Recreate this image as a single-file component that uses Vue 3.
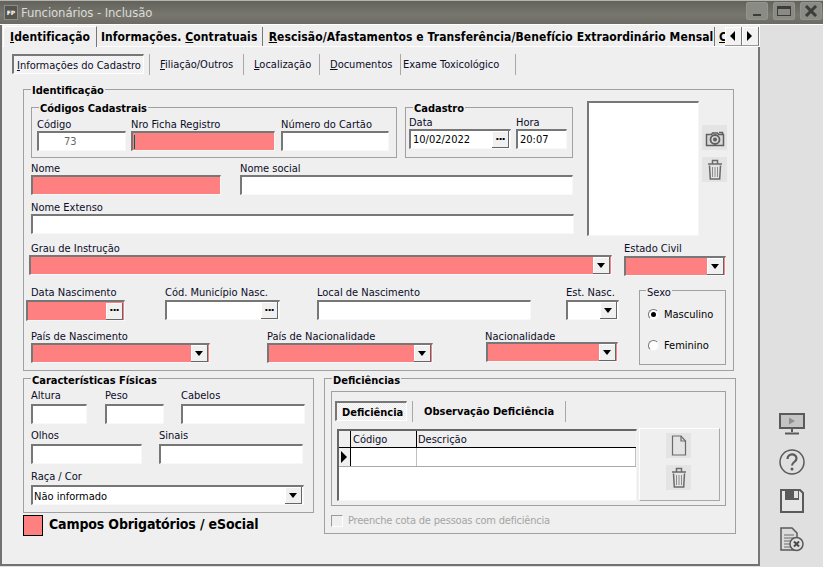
<template>
  <div class="win">
    <header class="title">
      <span class="fp">FP</span>
      <span class="title-text">Funcionários - Inclusão</span>
      <span class="wbtns">
        <span class="wbtn"><i class="w-min"></i></span>
        <span class="wbtn"><i class="w-max"></i></span>
        <span class="wbtn">
          <svg width="14" height="12" viewBox="0 0 14 12"><path d="M2 1l10 10M12 1L2 11" stroke="#3c3c38" stroke-width="3" fill="none"/></svg>
        </span>
      </span>
    </header>

    <div class="body">
      <main class="main">
        <nav class="tabs">
          <span class="tab tab-on t1"><u>I</u>dentificação</span>
          <span class="tab t2">Informações. <u>C</u>ontratuais</span>
          <span class="tab t3"><u>R</u>escisão/Afastamentos e Transferência/Benefício Extraordinário Mensal</span>
          <span class="tab t4"><u>C</u></span>
          <span class="arrows">
            <span class="arr"><i class="tri-l"></i></span>
            <span class="arr"><i class="tri-r"></i></span>
          </span>
        </nav>

        <section class="page">
          <nav class="subtabs">
            <span class="st-on s0"><u>I</u>nformações do Cadastro</span>
            <span class="st s1"><u>F</u>iliação/Outros</span>
            <span class="st s2"><u>L</u>ocalização</span>
            <span class="st s3"><u>D</u>ocumentos</span>
            <span class="st s4">Exame Toxicológico</span>
          </nav>

          <div class="group g-id">
            <span class="legend lg-id">Identificação</span>
            <div class="top">
              <div class="top-left">
                <div class="row">
                  <div class="group g-cod">
                    <span class="legend">Códigos Cadastrais</span>
                    <div class="row">
                      <div class="f w89"><label>Código</label><div class="inp code">73</div></div>
                      <div class="f w144 ml5"><label>Nro Ficha Registro</label><div class="inp pink"><i class="caret"></i></div></div>
                      <div class="f w108 ml6"><label>Número do Cartão</label><div class="inp"></div></div>
                    </div>
                  </div>
                  <div class="group g-cad">
                    <span class="legend">Cadastro</span>
                    <div class="row">
                      <div class="f w102"><label>Data</label><div class="inp val">10/02/2022<span class="btn dots">···</span></div></div>
                      <div class="f w51 ml5"><label>Hora</label><div class="inp val">20:07</div></div>
                    </div>
                  </div>
                </div>
                <div class="row mt3">
                  <div class="f w190"><label>Nome</label><div class="inp pink"></div></div>
                  <div class="f w333 ml19"><label>Nome social</label><div class="inp"></div></div>
                </div>
                <div class="f mt5"><label>Nome Extenso</label><div class="inp"></div></div>
              </div>
              <div class="photo"></div>
              <div class="pic-btns">
                <span class="ibtn">
                  <svg width="22" height="20" viewBox="0 0 22 20" fill="none" stroke="#5f5f5f">
                    <path d="M2.500 6.500h5l1-1.500h5l1 1.500h5v11h-17z" fill="#d8d8d8" stroke-width="1.500"/>
                    <circle cx="11" cy="11.500" r="4.500" stroke-width="1.800"/>
                    <circle cx="11" cy="11.500" r="2" fill="#5f5f5f" stroke="none"/>
                    <path d="M15 4.500h3.500v2" stroke-width="1.500"/>
                  </svg>
                </span>
                <span class="ibtn">
                  <svg width="16" height="22" viewBox="0 0 16 22" fill="none" stroke="#6a6a6a">
                    <path d="M1 5h14M5.500 4.500v-3h5v3" stroke-width="1.500"/>
                    <path d="M2.500 6.500l.8 13.500h9.400l.8-13.500" stroke-width="1.500"/>
                    <path d="M5.500 8v10M8 8v10M10.500 8v10" stroke="#8c8c8c"/>
                  </svg>
                </span>
              </div>
            </div>

            <div class="row mt5">
              <div class="f w583 grau"><label class="lb-in2">Grau de Instrução</label><div class="inp pink"><span class="btn"><i class="tri-d"></i></span></div></div>
              <div class="f w102 ml12"><label class="h15">Estado Civil</label><div class="inp pink"><span class="btn"><i class="tri-d"></i></span></div></div>
            </div>

            <div class="row">
              <div class="lower">
                <div class="row mt9 lower-1">
                  <div class="f w99"><label class="h15 lb-in5">Data Nascimento</label><div class="inp pink h21"><span class="btn dots">···</span></div></div>
                  <div class="f w115 ml40"><label class="h15">Cód. Município Nasc.</label><div class="inp"><span class="btn dots">···</span></div></div>
                  <div class="f w214 ml37"><label class="h15">Local de Nascimento</label><div class="inp"></div></div>
                  <div class="f w53 ml35"><label class="h15">Est. Nasc.</label><div class="inp"><span class="btn"><i class="tri-d"></i></span></div></div>
                </div>
                <div class="row mt8">
                  <div class="f w179"><label>País de Nascimento</label><div class="inp pink"><span class="btn"><i class="tri-d"></i></span></div></div>
                  <div class="f w166 ml57"><label>País de Nacionalidade</label><div class="inp pink"><span class="btn"><i class="tri-d"></i></span></div></div>
                  <div class="f w132 ml53"><label class="h13 lb-out1">Nacionalidade</label><div class="inp pink"><span class="btn"><i class="tri-d"></i></span></div></div>
                </div>
              </div>
              <div class="group g-sexo">
                <span class="legend lg-thin">Sexo</span>
                <div class="radio r-first"><i class="rd rd-on"></i><span class="rt">Masculino</span></div>
                <div class="radio r-second"><i class="rd"></i><span class="rt">Feminino</span></div>
              </div>
            </div>
          </div>

          <div class="bottom">
            <div class="bl">
              <div class="group g-car">
                <span class="legend">Características Físicas</span>
                <div class="row">
                  <div class="f w56"><label class="h17">Altura</label><div class="inp"></div></div>
                  <div class="f w59 ml18"><label class="h17">Peso</label><div class="inp"></div></div>
                  <div class="f w124 ml17"><label class="h17">Cabelos</label><div class="inp"></div></div>
                </div>
                <div class="row mt3">
                  <div class="f w111"><label class="h17">Olhos</label><div class="inp"></div></div>
                  <div class="f w144 ml17"><label class="h17">Sinais</label><div class="inp"></div></div>
                </div>
                <div class="f mt5 w273">
                  <label class="h16">Raça / Cor</label>
                  <div class="inp"><span class="raca-t">Não informado</span><span class="btn"><i class="tri-d"></i></span></div>
                </div>
              </div>
              <div class="req">
                <i class="req-box"></i>
                <span>Campos Obrigatórios / eSocial</span>
              </div>
            </div>

            <div class="group g-def">
              <span class="legend">Deficiências</span>
              <div class="def-in">
                <nav class="def-tabs">
                  <span class="st-on d0"><b>Deficiência</b></span>
                  <span class="st d1"><b>Observação Deficiência</b></span>
                </nav>
                <div class="def-row">
                  <div class="grid">
                    <div class="g-head">
                      <span class="c0 hd"></span>
                      <span class="c1 hd">Código</span>
                      <span class="c2 hd">Descrição</span>
                    </div>
                    <div class="g-line">
                      <span class="c0 hd ind"><i class="tri-ind"></i></span>
                      <span class="c1 cell"></span>
                      <span class="c2 cell"></span>
                    </div>
                  </div>
                  <div class="g-side">
                    <span class="ibtn">
                      <svg width="16" height="21" viewBox="0 0 16 21" fill="none" stroke="#6a6a6a" stroke-width="1.200">
                        <path d="M1.500 1h8.500l4.500 5v14h-13z"/>
                        <path d="M10 1v5h4.500"/>
                      </svg>
                    </span>
                    <span class="ibtn">
                      <svg width="16" height="22" viewBox="0 0 16 22" fill="none" stroke="#6a6a6a">
                        <path d="M1 5h14M5.500 4.500v-3h5v3" stroke-width="1.500"/>
                        <path d="M2.500 6.500l.8 13.500h9.400l.8-13.500" stroke-width="1.500"/>
                        <path d="M5.500 8v10M8 8v10M10.500 8v10" stroke="#8c8c8c"/>
                      </svg>
                    </span>
                  </div>
                </div>
              </div>
              <div class="chk"><i class="chk-box"></i><span class="chk-t">Preenche cota de pessoas com deficiência</span></div>
            </div>
          </div>
        </section>
      </main>

      <aside class="side">
        <svg class="s-mon" width="26" height="22" viewBox="0 0 26 22" fill="none">
          <rect x="1" y="1" width="24" height="14" fill="#c4c4c4" stroke="#5a5a5a" stroke-width="2"/>
          <path d="M10 4.500l6 3.500-6 3.500z" fill="#8e8e8e"/>
          <path d="M13 16v3M6 20.500h14" stroke="#5a5a5a" stroke-width="2"/>
        </svg>
        <svg class="s-help" width="26" height="26" viewBox="0 0 26 26" fill="none">
          <circle cx="13" cy="13" r="12" stroke="#5a5a5a" stroke-width="1.500"/>
          <path d="M8.500 10c0-6 9-6 9-.500 0 3.500-4.500 3.500-4.500 7" stroke="#5a5a5a" stroke-width="2.200"/>
          <circle cx="13" cy="20" r="1.500" fill="#5a5a5a"/>
        </svg>
        <svg class="s-save" width="24" height="24" viewBox="0 0 24 24" fill="none">
          <path d="M1 1h19l3 3v19H1z" stroke="#5a5a5a" stroke-width="2" fill="#e6e6e6"/>
          <path d="M5 1h14v10H5z" fill="#5a5a5a"/>
          <rect x="14" y="2" width="4" height="7" fill="#e0e0e0"/>
        </svg>
        <svg class="s-doc" width="24" height="25" viewBox="0 0 24 25" fill="none">
          <path d="M1 1h11l5 5v17H1z" fill="#dcdcdc" stroke="#5a5a5a" stroke-width="1.500"/>
          <path d="M4 8h10M4 11h10M4 14h6M4 17h6M4 20h6" stroke="#6a6a6a"/>
          <circle cx="16.500" cy="17" r="6.500" fill="#e0e0e0" stroke="#5a5a5a" stroke-width="1.500"/>
          <path d="M14 14.500l5 5M19 14.500l-5 5" stroke="#4a4a4a" stroke-width="2"/>
        </svg>
      </aside>
    </div>
  </div>
</template>

<script setup>
</script>

<style>
html, body { margin: 0; padding: 0; background: #e0e0e0; }
</style>

<style scoped>
.win {
  width: 823px;
  height: 567px;
  display: flex;
  flex-direction: column;
  overflow: hidden;
  font: 11px/14px "DejaVu Sans Condensed", "DejaVu Sans", sans-serif;
  font-stretch: condensed;
  color: #0c0c28;
  background: #e0e0e0;
}
.title {
  height: 25px;
  flex: none;
  box-sizing: border-box;
  border-top: 1px solid #b4b4b0;
  border-bottom: 1px solid #fff;
  display: flex;
  align-items: center;
  padding-left: 4px;
  background: linear-gradient(#62625b, #77776f 60%, #6b6b63);
}
.fp {
  width: 12px;
  height: 13px;
  background: #55554f;
  border: 1px solid #8d8d88;
  color: #fff;
  font: bold 6px/13px "DejaVu Sans", sans-serif;
  text-align: center;
  box-sizing: content-box;
}
.title-text {
  margin-left: 3px;
  font-size: 13px;
  color: #dcdcd8;
  letter-spacing: -.1px;
}
.wbtns { margin-left: auto; display: flex; gap: 5px; padding-right: 1px; margin-top: -3px; }
.wbtn {
  width: 22px;
  height: 18px;
  border-radius: 3px;
  background: #8b8b85;
  box-shadow: inset 0 0 0 1px #94948f;
  display: flex;
  align-items: center;
  justify-content: center;
  position: relative;
}
.w-min { width: 8px; height: 2px; background: #3c3c38; margin-top: 7px; }
.w-max { width: 14px; height: 10px; border: 1px solid #3c3c38; border-top-width: 3px; box-sizing: border-box; }

.body { flex: 1; display: flex; min-height: 0; }
.main {
  width: 760px;
  flex: none;
  display: flex;
  flex-direction: column;
  box-sizing: border-box;
  background: #efefef;
  border-left: 2px solid #727272;
  border-bottom: 2px solid #727272;
  margin-bottom: 1px;
}
.tabs {
  height: 22px;
  flex: none;
  display: flex;
  align-items: flex-start;
  font-weight: 700;
  font-size: 12px;
  letter-spacing: .1px;
  line-height: 20px;
  color: #000;
  box-sizing: border-box;
  border-bottom: 1px solid #fff;
  border-right: 1px solid #fff;
}
.tab {
  height: 19px;
  margin-top: 2px;
  white-space: nowrap;
  box-sizing: border-box;
  border-right: 1px solid #777;
  overflow: hidden;
}
.tab-on { height: 21px; margin-top: 1px; background: #efefef; border-top: 1px solid #fff; border-left: 1px solid #fff; margin-left: 1px; line-height: 20px; }
.t1 { width: 94px; padding-left: 6px; }
.t2 { width: 166px; padding-left: 4px; }
.t3 { width: 453px; padding-left: 6px; }
.t4 { width: 10px; padding-left: 4px; border-right: 0; }
.arrows { display: flex; margin-top: 2px; }
.arr {
  width: 16px;
  height: 18px;
  background: #f2f2f2;
  border-right: 1px solid #777;
  border-bottom: 1px solid #999;
  box-shadow: inset 1px 1px 0 #fff;
  display: flex;
  align-items: center;
  justify-content: center;
}
.tri-l { border: 5px solid transparent; border-left: 0; border-right: 5px solid #000; }
.tri-r { border: 5px solid transparent; border-right: 0; border-left: 5px solid #000; }

.page {
  flex: 1;
  min-height: 0;
  box-sizing: border-box;
  border-right: 2px solid #777;
  padding: 7px 0 0 21px;
}
.subtabs { display: flex; height: 21px; margin-left: -11px; }
.st-on {
  box-sizing: border-box;
  height: 20px;
  border-top: 2px solid #777;
  border-left: 2px solid #777;
  border-right: 1px solid #fff;
  border-bottom: 1px solid #fff;
  background: repeating-conic-gradient(#f8f8f8 0 25%, #ececec 0 50%) 0 0 / 2px 2px;
  white-space: nowrap;
}
.st { box-sizing: border-box; height: 21px; border-right: 1px solid #a8a8a8; white-space: nowrap; line-height: 21px; }
.s0 { width: 132px; padding-left: 3px; margin-right: 5px; line-height: 19px; }
.s1 { width: 95px; padding-left: 10px; border-left: 1px solid #a8a8a8; }
.s2 { width: 76px; padding-left: 10px; }
.s3 { width: 81px; padding-left: 10px; }
.s4 { width: 115px; padding-left: 2px; }

.group {
  position: relative;
  box-sizing: border-box;
  border: 1px solid #a0a0a0;
}
.legend {
  position: absolute;
  left: 7px;
  top: -6px;
  font-weight: 700;
  font-size: 11px;
  line-height: 13px;
  color: #000;
  background: #efefef;
  padding: 0 1px;
  white-space: nowrap;
}
.bottom .legend { top: -5px; }
.legend.lg-thin { font-weight: 400; color: #0c0c28; top: -5px; left: 6px; }
.g-id { margin-top: 14px; width: 711px; padding: 0 0 5px 7px; }
.top { display: flex; }
.top-left { width: 543px; margin-top: 17px; flex: none; }
.row { display: flex; }
.g-cod { width: 366px; height: 51px; padding: 9px 0 0 5px; }
.g-cad { width: 168px; height: 51px; margin-left: 8px; padding: 7px 0 0 3px; }
.photo {
  width: 112px;
  height: 135px;
  margin: 11px 0 0 13px;
  box-sizing: border-box;
  background: #fff;
  border: 1px solid #f6f6f6;
  border-top: 2px solid #777;
  border-left: 2px solid #777;
}
.pic-btns { display: flex; flex-direction: column; gap: 7px; margin: 35px 0 0 3px; }
.ibtn {
  width: 25px;
  height: 25px;
  background: #e4e4e4;
  display: flex;
  align-items: center;
  justify-content: center;
}

.f { display: flex; flex-direction: column; flex: none; }
.f label { height: 14px; line-height: 16px; white-space: nowrap; }
.f label.h13 { height: 13px; line-height: 15px; }
.f label.h15 { height: 15px; line-height: 15px; }
.f label.h16 { height: 16px; }
.f label.h17 { height: 17px; line-height: 17px; }
.lb-in2 { margin-left: 2px; }
.lb-in5 { margin-left: 5px; }
.lb-out1 { margin-left: -1px; }
.inp {
  box-sizing: border-box;
  height: 20px;
  background: #fff;
  border-top: 2px solid #777;
  border-left: 2px solid #777;
  border-right: 1px solid #f8f8f8;
  border-bottom: 1px solid #f8f8f8;
  display: flex;
  align-items: center;
  color: #000;
}
.h21 { height: 21px; }
.pink { background: #ff8080; }
.code { justify-content: flex-start; padding-left: 25px; color: #666; background: #fff; }
.val { padding-left: 2px; }
.raca-t { padding: 2px 0 0 1px; }
.caret { width: 1px; height: 14px; background: #006060; margin-left: 1px; }
.btn {
  margin-left: auto;
  width: 17px;
  height: 17px;
  flex: none;
  background: #f0f0f0;
  box-sizing: border-box;
  border-right: 1px solid #666;
  border-bottom: 1px solid #666;
  box-shadow: inset 1px 1px 0 #fff;
  margin-right: 1px;
  display: flex;
  align-items: center;
  justify-content: center;
}
.dots { font: 900 11px/13px "DejaVu Sans", sans-serif; color: #000; letter-spacing: -1px; }
.tri-d { border: 4px solid transparent; border-bottom: 0; border-top: 5px solid #000; }

.w51 { width: 51px; } .w53 { width: 53px; } .w56 { width: 56px; } .w59 { width: 59px; }
.w89 { width: 89px; } .w99 { width: 99px; } .w102 { width: 102px; } .w108 { width: 108px; }
.w111 { width: 111px; } .w115 { width: 115px; } .w124 { width: 124px; } .w132 { width: 132px; }
.w144 { width: 144px; } .w166 { width: 166px; } .w179 { width: 179px; } .w190 { width: 190px; }
.w214 { width: 214px; } .w273 { width: 273px; } .w333 { width: 333px; } .w583 { width: 583px; }
.ml5 { margin-left: 5px; } .ml6 { margin-left: 6px; } .ml12 { margin-left: 12px; } .ml17 { margin-left: 17px; }
.ml18 { margin-left: 18px; } .ml19 { margin-left: 19px; } .ml35 { margin-left: 35px; } .ml37 { margin-left: 37px; }
.ml40 { margin-left: 40px; } .ml53 { margin-left: 53px; } .ml57 { margin-left: 57px; }
.mt3 { margin-top: 3px; } .mt5 { margin-top: 5px; } .mt8 { margin-top: 8px; } .mt9 { margin-top: 9px; }
.grau { margin-left: -2px; }
.lower { width: 588px; flex: none; }
.lower-1 { margin-left: -5px; }
.g-sexo { width: 87px; height: 75px; margin: 14px 0 0 20px; flex: none; }
.radio { display: flex; align-items: center; height: 14px; padding-left: 8px; color: #000; }
.rt { padding-top: 1px; }
.r-first { margin-top: 16px; }
.r-second { margin-top: 17px; }
.rd {
  width: 11px;
  height: 11px;
  margin-right: 5px;
  box-sizing: border-box;
  border-radius: 50%;
  background: #fff;
  border: 1px solid #f4f4f4;
  border-top-color: #777;
  border-left-color: #777;
  display: flex;
  align-items: center;
  justify-content: center;
}
.rd-on::after { content: ""; width: 5px; height: 5px; border-radius: 50%; background: #000; }

.bottom { display: flex; margin-top: 7px; }
.bl { width: 291px; flex: none; }
.g-car { width: 291px; height: 135px; padding: 8px 0 0 7px; }
.req { display: flex; align-items: flex-start; margin-top: 2px; font-weight: 700; font-size: 14px; letter-spacing: -.15px; line-height: 18px; color: #000; }
.req-box { width: 20px; height: 21px; box-sizing: border-box; background: #ff8080; border: 1px solid #000; margin-right: 6px; flex: none; }
.g-def { width: 412px; height: 156px; margin-left: 10px; flex: none; padding: 12px 0 0 6px; }
.def-in { width: 395px; height: 115px; box-sizing: border-box; border: 1px solid #a0a0a0; padding: 9px 0 0 3px; }
.def-tabs { display: flex; height: 21px; }
.d0 { width: 72px; padding-left: 5px; margin-right: 5px; line-height: 19px; color: #000; }
.d1 { width: 154px; padding-left: 11px; border-left: 1px solid #a8a8a8; color: #000; }
.def-row { display: flex; margin-top: 6px; margin-left: 2px; }
.grid {
  width: 300px;
  height: 72px;
  margin-top: 1px;
  box-sizing: border-box;
  background: #fff;
  border-top: 2px solid #666;
  border-left: 2px solid #666;
  border-right: 1px solid #f4f4f4;
  border-bottom: 1px solid #f4f4f4;
}
.g-head, .g-line { display: flex; }
.g-head { height: 16px; border-bottom: 1px solid #000; }
.g-line { height: 18px; border-bottom: 1px solid #a8a8a8; }
.c0 { width: 12px; flex: none; }
.c1 { width: 66px; flex: none; padding-left: 2px; box-sizing: border-box; }
.c2 { flex: 1; padding-left: 1px; }
.hd { background: #efefef; border-right: 1px solid #000; box-sizing: border-box; line-height: 17px; }
.c2.hd { border-right: 0; }
.cell { border-right: 1px solid #c0c0c0; }
.ind { display: flex; align-items: center; padding-left: 2px; }
.tri-ind { border: 6px solid transparent; border-right: 0; border-left: 6px solid #000; }
.g-side {
  width: 81px;
  height: 73px;
  margin-left: 2px;
  box-sizing: border-box;
  border: 1px solid #a8a8a8;
  border-top-color: #fff;
  border-left-color: #fff;
  padding: 4px 0 0 26px;
  display: flex;
  flex-direction: column;
  gap: 7px;
}
.chk { display: flex; align-items: center; margin-top: 7px; color: #a4a4a4; }
.chk-t { padding-top: 1px; letter-spacing: -.2px; }
.chk-box {
  width: 12px;
  height: 12px;
  box-sizing: border-box;
  margin-right: 5px;
  border: 1px solid #fff;
  border-top: 1px solid #9a9a9a;
  border-left: 1px solid #9a9a9a;
}
.side { flex: 1; display: flex; flex-direction: column; align-items: center; padding-top: 388px; }
.s-help { margin-top: 14px; }
.s-save { margin-top: 14px; }
.s-doc { margin-top: 14px; }
</style>
